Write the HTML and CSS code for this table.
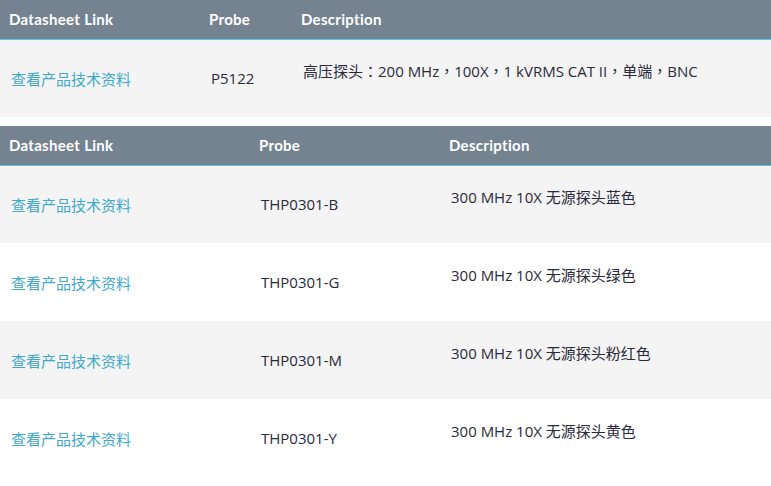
FILE: index.html
```html
<!DOCTYPE html>
<html lang="zh-CN">
<head>
<meta charset="utf-8">
<link rel="stylesheet" href="styles.css">
</head>
<body>
<table class="probes t1">
  <colgroup><col class="c1"><col class="c2"><col></colgroup>
  <thead>
    <tr><th>Datasheet Link</th><th>Probe</th><th>Description</th></tr>
  </thead>
  <tbody>
    <tr class="grey">
      <td><a href="#">查看产品技术资料</a></td>
      <td>P5122</td>
      <td class="desc punct" lang="zh-TW">高压探头：200 MHz，100X，1 kVRMS CAT II，单端，BNC</td>
    </tr>
  </tbody>
</table>
<table class="probes t2">
  <colgroup><col class="c1"><col class="c2"><col></colgroup>
  <thead>
    <tr><th>Datasheet Link</th><th>Probe</th><th>Description</th></tr>
  </thead>
  <tbody>
    <tr class="grey">
      <td><a href="#">查看产品技术资料</a></td>
      <td>THP0301-B</td>
      <td class="desc">300 MHz 10X 无源探头蓝色</td>
    </tr>
    <tr>
      <td><a href="#">查看产品技术资料</a></td>
      <td>THP0301-G</td>
      <td class="desc">300 MHz 10X 无源探头绿色</td>
    </tr>
    <tr class="grey">
      <td><a href="#">查看产品技术资料</a></td>
      <td>THP0301-M</td>
      <td class="desc">300 MHz 10X 无源探头粉红色</td>
    </tr>
    <tr>
      <td><a href="#">查看产品技术资料</a></td>
      <td>THP0301-Y</td>
      <td class="desc">300 MHz 10X 无源探头黄色</td>
    </tr>
  </tbody>
</table>
</body>
</html>
```
FILE: styles.css
```css
html, body {
  margin: 0;
  padding: 0;
  background: #ffffff;
}
body {
  font-family: "Open Sans", "Noto Sans CJK SC", sans-serif;
  font-size: 15px;
  color: #2a2a3a;
}
.probes {
  width: 771px;
  border-collapse: collapse;
  table-layout: fixed;
}
.t1 { margin-bottom: 9px; }
.t1 .c1 { width: 200px; }
.t1 .c2 { width: 92px; }
.t2 .c1 { width: 250px; }
.t2 .c2 { width: 190px; }
.probes th {
  background: #74838f;
  color: #ffffff;
  font-family: "Lato", "Roboto", sans-serif;
  font-weight: 700;
  font-size: 15px;
  letter-spacing: 0.3px;
  text-align: left;
  height: 38px;
  padding: 0 0 0 9px;
  border-bottom: 1px solid #56c6de;
  box-sizing: border-box;
}
.probes thead tr { height: 39px; }
.probes td {
  height: 78px;
  padding: 0 0 0 11px;
  vertical-align: middle;
  box-sizing: border-box;
}
.probes td.desc {
  padding-bottom: 16px;
}
.probes td.punct {
  font-family: "Open Sans", "Noto Sans CJK TC", sans-serif;
}
.probes tr.grey td { background: #f4f4f4; }
.probes a {
  color: #3ea9cb;
  text-decoration: none;
}
```
